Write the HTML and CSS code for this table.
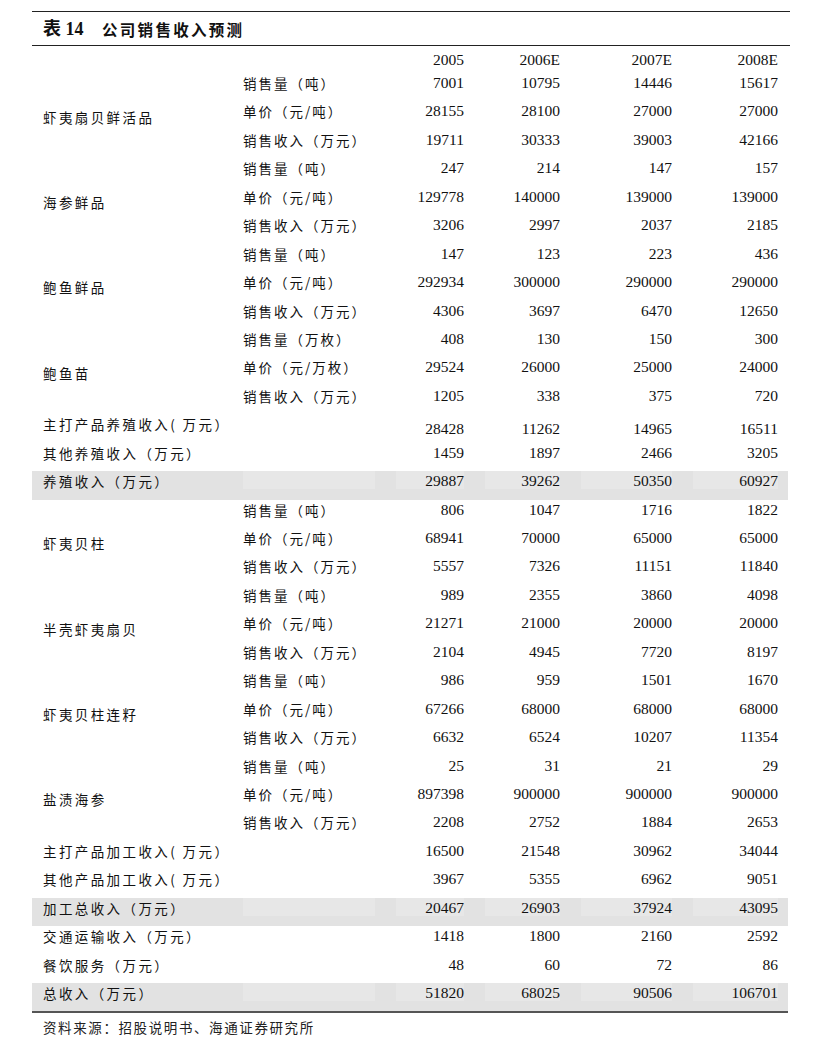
FILE: index.html
```html
<!DOCTYPE html>
<html lang="zh-CN">
<head>
<meta charset="utf-8">
<title>表 14 公司销售收入预测</title>
<link rel="stylesheet" href="styles.css">
</head>
<body>
<div class="page">
  <h1 class="title"><span class="tnum">表 14</span><span class="tname">公司销售收入预测</span></h1>
  <table class="data">
    <colgroup>
      <col class="c1"><col class="c2"><col class="c3"><col class="c4"><col class="c5"><col class="c6"><col class="c7">
    </colgroup>
    <thead>
      <tr class="head">
        <th></th><th></th>
        <th class="n"><div class="b b3">2005</div></th>
        <th class="n"><div class="b b4">2006E</div></th>
        <th class="n"><div class="b b5">2007E</div></th>
        <th class="n"><div class="b b6">2008E</div></th>
        <th></th>
      </tr>
    </thead>
    <tbody>
      <tr><td class="grp" rowspan="3">虾夷扇贝鲜活品</td><td class="sub"><div class="b b2">销售量（吨）</div></td><td class="n"><div class="b b3">7001</div></td><td class="n"><div class="b b4">10795</div></td><td class="n"><div class="b b5">14446</div></td><td class="n"><div class="b b6">15617</div></td><td></td></tr>
      <tr><td class="sub"><div class="b b2">单价（元/吨）</div></td><td class="n"><div class="b b3">28155</div></td><td class="n"><div class="b b4">28100</div></td><td class="n"><div class="b b5">27000</div></td><td class="n"><div class="b b6">27000</div></td><td></td></tr>
      <tr><td class="sub"><div class="b b2">销售收入（万元）</div></td><td class="n"><div class="b b3">19711</div></td><td class="n"><div class="b b4">30333</div></td><td class="n"><div class="b b5">39003</div></td><td class="n"><div class="b b6">42166</div></td><td></td></tr>

      <tr><td class="grp" rowspan="3">海参鲜品</td><td class="sub"><div class="b b2">销售量（吨）</div></td><td class="n"><div class="b b3">247</div></td><td class="n"><div class="b b4">214</div></td><td class="n"><div class="b b5">147</div></td><td class="n"><div class="b b6">157</div></td><td></td></tr>
      <tr><td class="sub"><div class="b b2">单价（元/吨）</div></td><td class="n"><div class="b b3">129778</div></td><td class="n"><div class="b b4">140000</div></td><td class="n"><div class="b b5">139000</div></td><td class="n"><div class="b b6">139000</div></td><td></td></tr>
      <tr><td class="sub"><div class="b b2">销售收入（万元）</div></td><td class="n"><div class="b b3">3206</div></td><td class="n"><div class="b b4">2997</div></td><td class="n"><div class="b b5">2037</div></td><td class="n"><div class="b b6">2185</div></td><td></td></tr>

      <tr><td class="grp" rowspan="3">鲍鱼鲜品</td><td class="sub"><div class="b b2">销售量（吨）</div></td><td class="n"><div class="b b3">147</div></td><td class="n"><div class="b b4">123</div></td><td class="n"><div class="b b5">223</div></td><td class="n"><div class="b b6">436</div></td><td></td></tr>
      <tr><td class="sub"><div class="b b2">单价（元/吨）</div></td><td class="n"><div class="b b3">292934</div></td><td class="n"><div class="b b4">300000</div></td><td class="n"><div class="b b5">290000</div></td><td class="n"><div class="b b6">290000</div></td><td></td></tr>
      <tr><td class="sub"><div class="b b2">销售收入（万元）</div></td><td class="n"><div class="b b3">4306</div></td><td class="n"><div class="b b4">3697</div></td><td class="n"><div class="b b5">6470</div></td><td class="n"><div class="b b6">12650</div></td><td></td></tr>

      <tr><td class="grp" rowspan="3">鲍鱼苗</td><td class="sub"><div class="b b2">销售量（万枚）</div></td><td class="n"><div class="b b3">408</div></td><td class="n"><div class="b b4">130</div></td><td class="n"><div class="b b5">150</div></td><td class="n"><div class="b b6">300</div></td><td></td></tr>
      <tr><td class="sub"><div class="b b2">单价（元/万枚）</div></td><td class="n"><div class="b b3">29524</div></td><td class="n"><div class="b b4">26000</div></td><td class="n"><div class="b b5">25000</div></td><td class="n"><div class="b b6">24000</div></td><td></td></tr>
      <tr><td class="sub"><div class="b b2">销售收入（万元）</div></td><td class="n"><div class="b b3">1205</div></td><td class="n"><div class="b b4">338</div></td><td class="n"><div class="b b5">375</div></td><td class="n"><div class="b b6">720</div></td><td></td></tr>

      <tr class="low"><td class="lbl" colspan="2">主打产品养殖收入( 万元）</td><td class="n"><div class="b b3">28428</div></td><td class="n"><div class="b b4">11262</div></td><td class="n"><div class="b b5">14965</div></td><td class="n"><div class="b b6">16511</div></td><td></td></tr>
      <tr><td class="lbl" colspan="2">其他养殖收入（万元）</td><td class="n"><div class="b b3">1459</div></td><td class="n"><div class="b b4">1897</div></td><td class="n"><div class="b b5">2466</div></td><td class="n"><div class="b b6">3205</div></td><td></td></tr>
      <tr class="total"><td class="lbl"><div class="b b1">养殖收入（万元）</div></td><td><div class="b b2"></div></td><td class="n"><div class="b b3">29887</div></td><td class="n"><div class="b b4">39262</div></td><td class="n"><div class="b b5">50350</div></td><td class="n"><div class="b b6">60927</div></td><td></td></tr>

      <tr><td class="grp" rowspan="3">虾夷贝柱</td><td class="sub"><div class="b b2">销售量（吨）</div></td><td class="n"><div class="b b3">806</div></td><td class="n"><div class="b b4">1047</div></td><td class="n"><div class="b b5">1716</div></td><td class="n"><div class="b b6">1822</div></td><td></td></tr>
      <tr><td class="sub"><div class="b b2">单价（元/吨）</div></td><td class="n"><div class="b b3">68941</div></td><td class="n"><div class="b b4">70000</div></td><td class="n"><div class="b b5">65000</div></td><td class="n"><div class="b b6">65000</div></td><td></td></tr>
      <tr><td class="sub"><div class="b b2">销售收入（万元）</div></td><td class="n"><div class="b b3">5557</div></td><td class="n"><div class="b b4">7326</div></td><td class="n"><div class="b b5">11151</div></td><td class="n"><div class="b b6">11840</div></td><td></td></tr>

      <tr><td class="grp" rowspan="3">半壳虾夷扇贝</td><td class="sub"><div class="b b2">销售量（吨）</div></td><td class="n"><div class="b b3">989</div></td><td class="n"><div class="b b4">2355</div></td><td class="n"><div class="b b5">3860</div></td><td class="n"><div class="b b6">4098</div></td><td></td></tr>
      <tr><td class="sub"><div class="b b2">单价（元/吨）</div></td><td class="n"><div class="b b3">21271</div></td><td class="n"><div class="b b4">21000</div></td><td class="n"><div class="b b5">20000</div></td><td class="n"><div class="b b6">20000</div></td><td></td></tr>
      <tr><td class="sub"><div class="b b2">销售收入（万元）</div></td><td class="n"><div class="b b3">2104</div></td><td class="n"><div class="b b4">4945</div></td><td class="n"><div class="b b5">7720</div></td><td class="n"><div class="b b6">8197</div></td><td></td></tr>

      <tr><td class="grp" rowspan="3">虾夷贝柱连籽</td><td class="sub"><div class="b b2">销售量（吨）</div></td><td class="n"><div class="b b3">986</div></td><td class="n"><div class="b b4">959</div></td><td class="n"><div class="b b5">1501</div></td><td class="n"><div class="b b6">1670</div></td><td></td></tr>
      <tr><td class="sub"><div class="b b2">单价（元/吨）</div></td><td class="n"><div class="b b3">67266</div></td><td class="n"><div class="b b4">68000</div></td><td class="n"><div class="b b5">68000</div></td><td class="n"><div class="b b6">68000</div></td><td></td></tr>
      <tr><td class="sub"><div class="b b2">销售收入（万元）</div></td><td class="n"><div class="b b3">6632</div></td><td class="n"><div class="b b4">6524</div></td><td class="n"><div class="b b5">10207</div></td><td class="n"><div class="b b6">11354</div></td><td></td></tr>

      <tr><td class="grp" rowspan="3">盐渍海参</td><td class="sub"><div class="b b2">销售量（吨）</div></td><td class="n"><div class="b b3">25</div></td><td class="n"><div class="b b4">31</div></td><td class="n"><div class="b b5">21</div></td><td class="n"><div class="b b6">29</div></td><td></td></tr>
      <tr><td class="sub"><div class="b b2">单价（元/吨）</div></td><td class="n"><div class="b b3">897398</div></td><td class="n"><div class="b b4">900000</div></td><td class="n"><div class="b b5">900000</div></td><td class="n"><div class="b b6">900000</div></td><td></td></tr>
      <tr><td class="sub"><div class="b b2">销售收入（万元）</div></td><td class="n"><div class="b b3">2208</div></td><td class="n"><div class="b b4">2752</div></td><td class="n"><div class="b b5">1884</div></td><td class="n"><div class="b b6">2653</div></td><td></td></tr>

      <tr><td class="lbl" colspan="2">主打产品加工收入( 万元）</td><td class="n"><div class="b b3">16500</div></td><td class="n"><div class="b b4">21548</div></td><td class="n"><div class="b b5">30962</div></td><td class="n"><div class="b b6">34044</div></td><td></td></tr>
      <tr><td class="lbl" colspan="2">其他产品加工收入( 万元）</td><td class="n"><div class="b b3">3967</div></td><td class="n"><div class="b b4">5355</div></td><td class="n"><div class="b b5">6962</div></td><td class="n"><div class="b b6">9051</div></td><td></td></tr>
      <tr class="total"><td class="lbl"><div class="b b1">加工总收入（万元）</div></td><td><div class="b b2"></div></td><td class="n"><div class="b b3">20467</div></td><td class="n"><div class="b b4">26903</div></td><td class="n"><div class="b b5">37924</div></td><td class="n"><div class="b b6">43095</div></td><td></td></tr>

      <tr><td class="lbl" colspan="2">交通运输收入（万元）</td><td class="n"><div class="b b3">1418</div></td><td class="n"><div class="b b4">1800</div></td><td class="n"><div class="b b5">2160</div></td><td class="n"><div class="b b6">2592</div></td><td></td></tr>
      <tr><td class="lbl" colspan="2">餐饮服务（万元）</td><td class="n"><div class="b b3">48</div></td><td class="n"><div class="b b4">60</div></td><td class="n"><div class="b b5">72</div></td><td class="n"><div class="b b6">86</div></td><td></td></tr>
      <tr class="total last"><td class="lbl"><div class="b b1">总收入（万元）</div></td><td><div class="b b2"></div></td><td class="n"><div class="b b3">51820</div></td><td class="n"><div class="b b4">68025</div></td><td class="n"><div class="b b5">90506</div></td><td class="n"><div class="b b6">106701</div></td><td></td></tr>
    </tbody>
  </table>
  <p class="source">资料来源：招股说明书、海通证券研究所</p>
</div>
</body>
</html>
```

FILE: styles.css
```css
html, body {
  margin: 0;
  padding: 0;
  background: #ffffff;
}

body {
  color: #111111;
  font-family: "Liberation Serif", "Noto Sans CJK SC", serif;
}

.page {
  padding: 11px 0 0 32px;
  width: 758px;
}

.title {
  margin: 0;
  border-top: 1px solid #222222;
  border-bottom: 1px solid #222222;
  height: 33px;
  box-sizing: content-box;
  padding: 0 0 0 11px;
  display: flex;
  align-items: center;
  font-size: 16px;
  line-height: 22px;
  font-weight: 700;
}

.tnum {
  font-family: "Liberation Serif", "Noto Sans CJK SC", serif;
  font-size: 18px;
  width: 59px;
}

.tname {
  font-family: "Noto Sans CJK SC", sans-serif;
  font-size: 15.5px;
  letter-spacing: 2.3px;
  font-weight: 700;
}

.data {
  border-collapse: collapse;
  table-layout: fixed;
  width: 756px;
  font-size: 15.5px;
}

.c1 { width: 200px; }
.c2 { width: 143px; }
.c3 { width: 89px; }
.c4 { width: 96px; }
.c5 { width: 112px; }
.c6 { width: 106px; }
.c7 { width: 10px; }

.data th,
.data td {
  padding: 0;
  vertical-align: top;
  line-height: 20px;
  font-weight: 400;
  text-align: left;
  height: 28.44px;
  white-space: nowrap;
}

.data .head th {
  height: 27px;
  padding-top: 4px;
  box-sizing: border-box;
}

.b {
  display: block;
  height: 18px;
  line-height: 20px;
}

.b1 { margin-left: 11px; }
.b2 { margin-left: 11px; }
.b3, .b4, .b5, .b6 { margin-left: 21px; }

.data .n {
  text-align: right;
}

.grp,
.lbl,
.sub {
  font-family: "Noto Sans CJK SC", sans-serif;
  font-size: 13.5px;
  letter-spacing: 2.4px;
}

.data .grp {
  vertical-align: middle;
  padding: 2px 0 0 11px;
}

.data .lbl {
  padding-left: 11px;
}

.data .lbl .b1 {
  margin-left: 0;
}

.sub {
  letter-spacing: 2px;
}

.low .n .b {
  margin-top: 5px;
}

.total td {
  background: #e2e2e2;
}

.total .b {
  background: #e7e7e7;
}

.total .lbl .b1 {
  background: transparent;
}

.last td {
  border-bottom: 2px solid #555555;
}

.source {
  margin: 0;
  padding: 4px 0 0 11px;
  line-height: 20px;
  font-family: "Noto Sans CJK SC", sans-serif;
  font-size: 13.5px;
  letter-spacing: 1.6px;
  color: #222222;
}
```
